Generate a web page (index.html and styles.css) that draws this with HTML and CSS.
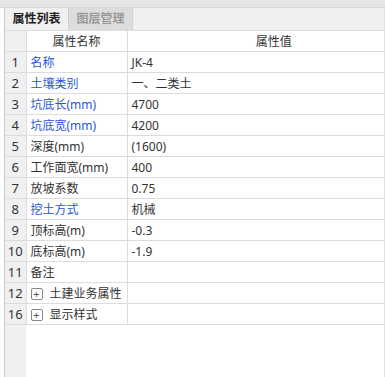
FILE: index.html
```html
<!DOCTYPE html>
<html lang="zh-CN">
  <head>
    <meta charset="UTF-8" />
    <title>属性列表</title>
    <link rel="stylesheet" href="styles.css">
  </head>
  <body>
    <div class="topbar"></div>
    <section class="panel">
      <nav class="tabs">
        <span class="tab active">属性列表</span>
        <span class="tab">图层管理</span>
      </nav>
      <div class="grid-wrap">
        <table class="props">
          <colgroup>
            <col class="c-idx">
            <col class="c-name">
            <col class="c-val">
          </colgroup>
          <thead>
            <tr>
              <th class="idx"></th>
              <th>属性名称</th>
              <th class="val-head">属性值</th>
            </tr>
          </thead>
          <tbody>
            <tr><td class="idx">1</td><td class="name link">名称</td><td>JK-4</td></tr>
            <tr><td class="idx">2</td><td class="name link">土壤类别</td><td>一、二类土</td></tr>
            <tr><td class="idx">3</td><td class="name link">坑底长(mm)</td><td>4700</td></tr>
            <tr><td class="idx">4</td><td class="name link">坑底宽(mm)</td><td>4200</td></tr>
            <tr><td class="idx">5</td><td class="name">深度(mm)</td><td>(1600)</td></tr>
            <tr><td class="idx">6</td><td class="name">工作面宽(mm)</td><td>400</td></tr>
            <tr><td class="idx">7</td><td class="name">放坡系数</td><td>0.75</td></tr>
            <tr><td class="idx">8</td><td class="name link">挖土方式</td><td>机械</td></tr>
            <tr><td class="idx">9</td><td class="name">顶标高(m)</td><td>-0.3</td></tr>
            <tr><td class="idx">10</td><td class="name">底标高(m)</td><td>-1.9</td></tr>
            <tr><td class="idx">11</td><td class="name">备注</td><td></td></tr>
            <tr><td class="idx">12</td><td class="name"><span class="plus">+</span>土建业务属性</td><td></td></tr>
            <tr><td class="idx">16</td><td class="name"><span class="plus">+</span>显示样式</td><td></td></tr>
          </tbody>
        </table>
        <div class="filler"></div>
      </div>
    </section>
  </body>
</html>
```

FILE: styles.css
```css
html,
body {
  margin: 0;
  padding: 0;
  height: 100%;
  overflow: hidden;
}

body {
  font-family: "Noto Sans", "Noto Sans CJK SC", sans-serif;
  font-size: 12px;
  color: #333;
  background: #fff;
  display: flex;
  flex-direction: column;
}

.topbar {
  height: 7px;
  background: #e6e6e6;
  border-bottom: 1px solid #d6d6d6;
}

.panel {
  flex: 1;
  display: flex;
  flex-direction: column;
  margin-left: 4px;
  border-left: 1px solid #c8c8c8;
  border-right: 1px solid #e2e2e2;
}

.tabs {
  display: flex;
  height: 22px;
  background: #f0f0f0;
}

.tab {
  width: 63px;
  border-right: 1px solid #d0d0d0;
  text-align: center;
  line-height: 22px;
  font-size: 12px;
  font-weight: bold;
  color: #999;
  background: #dddddd;
}

.tab.active {
  color: #222;
  background: #f0f0f0;
}

.grid-wrap {
  flex: 1;
  display: flex;
  flex-direction: column;
  background: linear-gradient(to right, #f0f0f0 21px, #fff 21px);
}

.props {
  border-collapse: collapse;
  table-layout: fixed;
  width: 100%;
  background: #fff;
}

.c-idx {
  width: 21px;
}

.c-name {
  width: 101px;
}

.props th,
.props td {
  height: 20px;
  padding: 0 0 0 4px;
  border-top: 1px solid #dcdcdc;
  border-left: 1px solid #dcdcdc;
  white-space: nowrap;
  overflow: hidden;
  text-align: left;
  font-weight: normal;
}

.props th {
  text-align: center;
  padding: 0;
}

.props .val-head {
  padding-left: 36px;
}

.props tbody tr:last-child td {
  border-bottom: 1px solid #dcdcdc;
}

.props .idx {
  background: #f0f0f0;
  border-left: none;
  text-align: center;
  padding: 0;
  font-size: 13px;
}

.link {
  color: #2b55d4;
}

.plus {
  display: inline-block;
  width: 10px;
  height: 10px;
  line-height: 9px;
  margin: 0 7px 0 0;
  border: 1px solid #888;
  border-radius: 2px;
  font-size: 11px;
  text-align: center;
  color: #555;
  vertical-align: 0;
}

.filler {
  flex: 1;
}
```
